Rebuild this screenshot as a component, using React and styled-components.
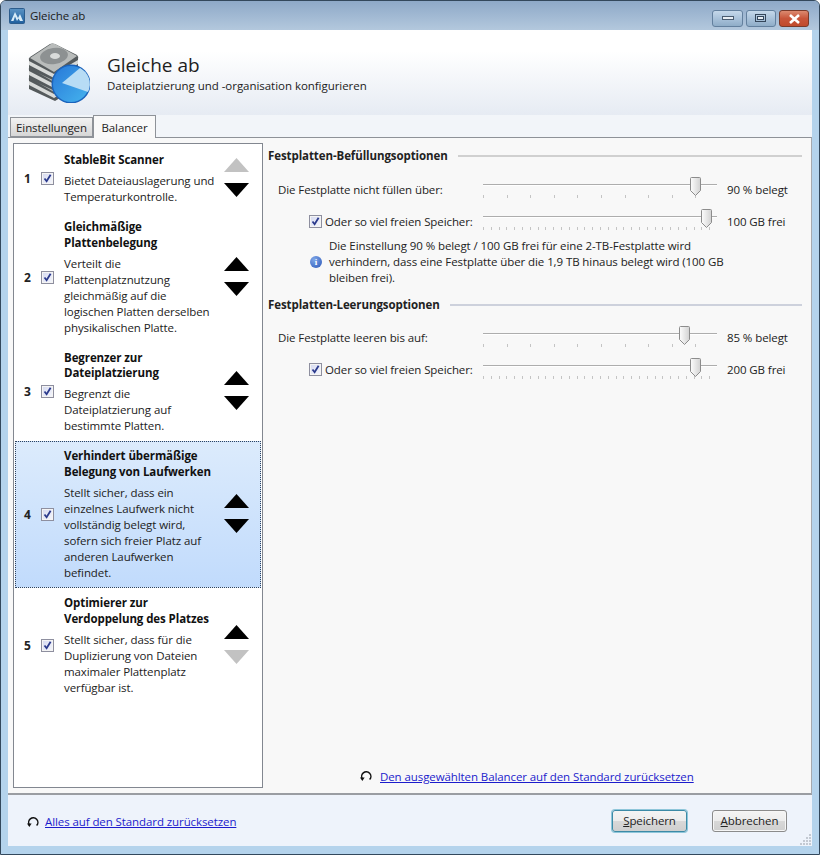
import React from 'react';
import styled, { createGlobalStyle } from 'styled-components';

const Global = createGlobalStyle`
  html, body { margin: 0; padding: 0; }
  body { font-family: "Open Sans", "Noto Sans", sans-serif; font-size: 11.5px; letter-spacing: -0.09px; color: #222; }
`;

const items = [
  { n: 1, title: ['StableBit Scanner'], desc: ['Bietet Dateiauslagerung und', 'Temperaturkontrolle.'], upOff: true },
  { n: 2, title: ['Gleichmäßige', 'Plattenbelegung'], desc: ['Verteilt die', 'Plattenplatznutzung', 'gleichmäßig auf die', 'logischen Platten derselben', 'physikalischen Platte.'] },
  { n: 3, title: ['Begrenzer zur', 'Dateiplatzierung'], desc: ['Begrenzt die', 'Dateiplatzierung auf', 'bestimmte Platten.'] },
  { n: 4, title: ['Verhindert übermäßige', 'Belegung von Laufwerken'], desc: ['Stellt sicher, dass ein', 'einzelnes Laufwerk nicht', 'vollständig belegt wird,', 'sofern sich freier Platz auf', 'anderen Laufwerken', 'befindet.'], selected: true },
  { n: 5, title: ['Optimierer zur', 'Verdoppelung des Platzes'], desc: ['Stellt sicher, dass für die', 'Duplizierung von Dateien', 'maximaler Plattenplatz', 'verfügbar ist.'], downOff: true },
];

function Lines({ text }) {
  return text.map((l) => <Line key={l}>{l}</Line>);
}

function Check() {
  return (
    <CheckBox>
      <svg width="9" height="9" viewBox="0 0 9 9">
        <path d="M1.5 4.5 L3.6 7.2 L7.6 0.8" fill="none" stroke="#2b3a8c" strokeWidth="1.8" />
      </svg>
    </CheckBox>
  );
}

function Arrow({ down, off }) {
  return (
    <svg width="25" height="14" viewBox="0 0 25 14">
      <path d={down ? 'M0 0 H25 L12.5 14 Z' : 'M12.5 0 L25 14 H0 Z'} fill={off ? '#c2c2c2' : '#000'} />
    </svg>
  );
}

function Reset() {
  return (
    <svg width="12" height="12" viewBox="0 0 12 12">
      <path d="M2.6 9.2 A4.6 4.6 0 1 1 9.6 9.6" fill="none" stroke="#111" strokeWidth="1.5" />
      <path d="M0 7.4 H4.6 L2.4 11 Z" fill="#111" />
    </svg>
  );
}

function Slider({ value, step }) {
  return (
    <SliderBox>
      <Track />
      <Ticks $step={step} />
      <Thumb style={{ left: `${value}px` }}>
        <svg width="11" height="19" viewBox="0 0 11 19">
          <defs>
            <linearGradient id="thumbFill" x1="0" y1="0" x2="1" y2="0">
              <stop offset="0" stopColor="#fdfdfd" />
              <stop offset="1" stopColor="#d2d2d2" />
            </linearGradient>
          </defs>
          <path d="M0.5 1.5 Q0.5 0.5 1.5 0.5 H9.5 Q10.5 0.5 10.5 1.5 V13.5 L5.5 18.5 L0.5 13.5 Z" fill="url(#thumbFill)" stroke="#8c8c8c" />
        </svg>
      </Thumb>
    </SliderBox>
  );
}

function DiskLogo() {
  const slab = (y) => (
    <g key={y}>
      <path d={`M1 ${y + 17} Q0 ${y + 16} 2 ${y + 14} L22 ${y + 1} Q24 ${y} 27 ${y + 1} L49 ${y + 12} Q51 ${y + 14} 50 ${y + 16} L50 ${y + 24} L27 ${y + 38} L1 ${y + 26} Z`} fill="#555a5c" />
      <path d={`M1 ${y + 18} L26 ${y + 31} L50 ${y + 17} L50 ${y + 21} L26 ${y + 35} L1 ${y + 22} Z`} fill="#d8dad8" />
      <path d={`M2 ${y + 15} L23 ${y + 1} Q25 ${y} 27 ${y + 1} L49 ${y + 13} L26 ${y + 29} Z`} fill="#b9bcbb" />
    </g>
  );
  return (
    <svg width="62" height="60" viewBox="0 0 62 60">
      <defs>
        <linearGradient id="pieFill" x1="0" y1="0" x2="1" y2="1">
          <stop offset="0" stopColor="#2878d8" />
          <stop offset="1" stopColor="#45b4ee" />
        </linearGradient>
      </defs>
      {[20, 10, 0].map(slab)}
      <ellipse cx="26" cy="13" rx="14" ry="8" fill="#8d9192" transform="rotate(-8 26 13)" />
      <ellipse cx="27" cy="13" rx="5" ry="3" fill="#d9dbda" />
      <circle cx="43" cy="41" r="19.5" fill="#1a63bc" />
      <circle cx="43" cy="41" r="18" fill="url(#pieFill)" />
      <path d="M34 40 L52 25 A18 18 0 0 1 60 49 Z" fill="#b7dcf5" />
    </svg>
  );
}

function AppIcon() {
  return (
    <svg width="16" height="16" viewBox="0 0 16 16">
      <defs>
        <linearGradient id="appFill" x1="0" y1="0" x2="0" y2="1">
          <stop offset="0" stopColor="#5a93c4" />
          <stop offset="1" stopColor="#1f5f9e" />
        </linearGradient>
      </defs>
      <rect x="0.5" y="0.5" width="15" height="15" rx="1" fill="url(#appFill)" stroke="#2c5c8c" />
      <path d="M2 13 L6 4 L9 10 L11 6 L14 13 H11 L9.5 10.5 L8 13 L6 8.5 L4.5 13 Z" fill="#d8ecf8" />
    </svg>
  );
}

export default function App() {
  return (
    <Window>
      <Global />
      <TitleBar>
        <AppIcon />
        <TitleText>Gleiche ab</TitleText>
        <WinButtons>
          <WinButton $wide>
            <svg width="12" height="5"><rect x="0.5" y="0.5" width="11" height="3" fill="#e8eef4" stroke="#4a5c70" /></svg>
          </WinButton>
          <WinButton>
            <svg width="12" height="9"><rect x="0.5" y="0.5" width="10" height="7" fill="none" stroke="#34465a" /><rect x="2.5" y="2.5" width="6" height="3" fill="#e8eef4" stroke="#34465a" /></svg>
          </WinButton>
          <WinButton $close>
            <svg width="13" height="10" viewBox="0 0 13 10"><path d="M2 1 L11 9 M11 1 L2 9" stroke="#fff" strokeWidth="2.6" /></svg>
          </WinButton>
        </WinButtons>
      </TitleBar>
      <Body>
        <Header>
          <LogoWrap><DiskLogo /></LogoWrap>
          <HeaderText>
            <HeaderTitle>Gleiche ab</HeaderTitle>
            <HeaderSub>Dateiplatzierung und -organisation konfigurieren</HeaderSub>
          </HeaderText>
        </Header>
        <TabRow>
          <Tab>Einstellungen</Tab>
          <Tab $active>Balancer</Tab>
        </TabRow>
        <Panel>
          <ListBox>
            {items.map((it) => (
              <Item key={it.n} $selected={it.selected}>
                <Num>{it.n}</Num>
                <Check />
                <ItemText>
                  <ItemTitle><Lines text={it.title} /></ItemTitle>
                  <div><Lines text={it.desc} /></div>
                </ItemText>
                <Arrows>
                  <Arrow off={it.upOff} />
                  <Arrow down off={it.downOff} />
                </Arrows>
              </Item>
            ))}
          </ListBox>
          <Options>
            <Heading>Festplatten-Befüllungsoptionen</Heading>
            <Rows>
              <Row>
                <RowLabel>Die Festplatte nicht füllen über:</RowLabel>
                <Slider value={207} step={23.6} />
                <RowValue>90 % belegt</RowValue>
              </Row>
              <Row>
                <RowLabel $indent><Check />Oder so viel freien Speicher:</RowLabel>
                <Slider value={218} step={7.8} />
                <RowValue>100 GB frei</RowValue>
              </Row>
            </Rows>
            <Note>
              <InfoIcon>i</InfoIcon>
              <NoteText>
                <Line>Die Einstellung 90 % belegt / 100 GB frei für eine 2-TB-Festplatte wird</Line>
                <Line>verhindern, dass eine Festplatte über die 1,9 TB hinaus belegt wird (100 GB</Line>
                <Line>bleiben frei).</Line>
              </NoteText>
            </Note>
            <Heading $second>Festplatten-Leerungsoptionen</Heading>
            <Rows>
              <Row>
                <RowLabel>Die Festplatte leeren bis auf:</RowLabel>
                <Slider value={196} step={23.6} />
                <RowValue>85 % belegt</RowValue>
              </Row>
              <Row>
                <RowLabel $indent><Check />Oder so viel freien Speicher:</RowLabel>
                <Slider value={207} step={7.8} />
                <RowValue>200 GB frei</RowValue>
              </Row>
            </Rows>
            <ResetRow>
              <Reset />
              <LinkText href="#">Den ausgewählten Balancer auf den Standard zurücksetzen</LinkText>
            </ResetRow>
          </Options>
        </Panel>
        <Footer>
          <FooterLink>
            <Reset />
            <LinkText href="#">Alles auf den Standard zurücksetzen</LinkText>
          </FooterLink>
          <FooterButtons>
            <Button $focused><u>S</u>peichern</Button>
            <Button><u>A</u>bbrechen</Button>
          </FooterButtons>
          <Grip>
            <svg width="12" height="12" viewBox="0 0 12 12" fill="#c3c9d2">
              <rect x="9" y="0" width="2" height="2" />
              <rect x="6" y="3" width="2" height="2" /><rect x="9" y="3" width="2" height="2" />
              <rect x="3" y="6" width="2" height="2" /><rect x="6" y="6" width="2" height="2" /><rect x="9" y="6" width="2" height="2" />
              <rect x="0" y="9" width="2" height="2" /><rect x="3" y="9" width="2" height="2" /><rect x="6" y="9" width="2" height="2" /><rect x="9" y="9" width="2" height="2" />
            </svg>
          </Grip>
        </Footer>
      </Body>
    </Window>
  );
}

const Window = styled.div`
  width: 820px;
  height: 855px;
  box-sizing: border-box;
  display: flex;
  flex-direction: column;
  border: 1px solid #33485c;
  border-radius: 6px 6px 0 0;
  background: #b4d3ec;
  overflow: hidden;
`;
const TitleBar = styled.div`
  height: 29px;
  flex: none;
  display: flex;
  align-items: center;
  padding: 0 10px 0 8px;
  background: linear-gradient(to bottom, #8ea9c8, #b3c8dd);
`;
const TitleText = styled.span`
  margin-left: 5px;
  color: #1a1a1a;
`;
const WinButtons = styled.div`
  margin-left: auto;
  display: flex;
  gap: 3px;
  align-self: flex-start;
  margin-top: 9px;
`;
const WinButton = styled.div`
  width: ${(p) => (p.$wide ? '31px' : '30px')};
  height: 17px;
  box-sizing: border-box;
  display: flex;
  align-items: center;
  justify-content: center;
  border: 1px solid ${(p) => (p.$close ? '#7a3a2a' : '#63809e')};
  border-radius: 3px;
  background: ${(p) =>
    p.$close
      ? 'linear-gradient(to bottom, #dc8a70 0, #c8553a 50%, #c04a2c 100%)'
      : 'linear-gradient(to bottom, #c5d8ea 0, #a9c2da 50%, #8fadc8 100%)'};
`;
const Body = styled.div`
  flex: 1;
  display: flex;
  flex-direction: column;
  margin: 0 7px 8px;
  min-height: 0;
`;
const Header = styled.div`
  height: 85px;
  flex: none;
  display: flex;
  background: linear-gradient(to bottom, #fff 0, #fff 25%, #e6ebf3 100%);
`;
const LogoWrap = styled.div`
  padding: 13px 0 0 20px;
  width: 79px;
`;
const HeaderText = styled.div`
  padding-top: 22px;
`;
const HeaderTitle = styled.div`
  font-size: 19px;
  line-height: 26px;
  letter-spacing: 0;
  color: #1e1e1e;
`;
const HeaderSub = styled.div`
  line-height: 16px;
  letter-spacing: -0.04px;
`;
const TabRow = styled.div`
  height: 22px;
  flex: none;
  display: flex;
  align-items: flex-end;
  padding-left: 2px;
  background: #f2f5f9;
`;
const Tab = styled.div`
  box-sizing: border-box;
  height: ${(p) => (p.$active ? '23px' : '20px')};
  margin-bottom: ${(p) => (p.$active ? '-1px' : '0')};
  width: ${(p) => (p.$active ? '63px' : '83px')};
  display: flex;
  align-items: center;
  justify-content: center;
  position: relative;
  z-index: ${(p) => (p.$active ? 2 : 1)};
  border: 1px solid #8e9298;
  border-bottom: ${(p) => (p.$active ? 'none' : '1px solid #8e9298')};
  background: ${(p) => (p.$active ? '#f9f9f9' : 'linear-gradient(to bottom, #f2f2f2, #d6d6d6)')};
`;
const Panel = styled.div`
  flex: 1;
  min-height: 0;
  box-sizing: border-box;
  display: flex;
  padding: 5px 0 5px 5px;
  background: #f8f8f8;
  border-top: 1px solid #8e9298;
  border-bottom: 2px solid #9a9da2;
  border-right: 1px solid #a6a9ae;
`;
const ListBox = styled.div`
  width: 250px;
  flex: none;
  box-sizing: border-box;
  padding: 1px;
  background: #fff;
  border: 1px solid #828790;
`;
const Item = styled.div`
  box-sizing: border-box;
  display: flex;
  align-items: center;
  padding: 6px 0 6px 8px;
  border: 1px ${(p) => (p.$selected ? 'dotted #30435c' : 'solid transparent')};
  background: ${(p) => (p.$selected ? 'linear-gradient(to bottom, #dcebfc, #c1dbfc)' : 'transparent')};
`;
const Num = styled.span`
  width: 17px;
  flex: none;
  font-weight: 700;
  font-size: 12px;
`;
const CheckBox = styled.span`
  width: 13px;
  height: 13px;
  flex: none;
  box-sizing: border-box;
  display: inline-flex;
  align-items: center;
  justify-content: center;
  border: 1px solid #8e8f9f;
  background: linear-gradient(135deg, #d5d9f0, #f6f7fc);
  box-shadow: inset 0 0 0 1px #f4f4f4;
`;
const ItemText = styled.div`
  width: 160px;
  flex: none;
  margin-left: 10px;
`;
const Line = styled.div`
  line-height: 15.95px;
  white-space: nowrap;
`;
const ItemTitle = styled.div`
  font-weight: 700;
  margin-bottom: 5px;
  color: #111;
`;
const Arrows = styled.div`
  display: flex;
  flex-direction: column;
  gap: 11px;
  margin-top: -2px;
  svg { display: block; }
`;
const Options = styled.div`
  flex: 1;
  min-width: 0;
  display: flex;
  flex-direction: column;
  padding: 5px 9px 4px 5px;
`;
const Heading = styled.div`
  display: flex;
  align-items: center;
  gap: 10px;
  font-weight: 700;
  line-height: 16px;
  margin-top: ${(p) => (p.$second ? '11px' : '0')};
  &::after {
    content: '';
    flex: 1;
    height: 2px;
    background: ${(p) => (p.$second ? '#cdd1dc' : '#d0d0d0')};
  }
`;
const Rows = styled.div`
  margin: 10px 0 0 10px;
`;
const Row = styled.div`
  height: 32px;
  display: flex;
  align-items: center;
`;
const RowLabel = styled.div`
  width: 205px;
  flex: none;
  box-sizing: border-box;
  display: flex;
  align-items: center;
  gap: 3px;
  padding-left: ${(p) => (p.$indent ? '31px' : '0')};
  padding-bottom: 2px;
  white-space: nowrap;
`;
const SliderBox = styled.div`
  width: 234px;
  height: 32px;
  flex: none;
  position: relative;
`;
const Track = styled.div`
  position: absolute;
  left: 0;
  right: 0;
  top: 10px;
  height: 2px;
  background: linear-gradient(to bottom, #adadad 50%, #fff 50%);
`;
const Ticks = styled.div`
  position: absolute;
  left: 0;
  right: 0;
  top: 21px;
  height: 3px;
  background: repeating-linear-gradient(to right, #c4c4c4 0, #c4c4c4 1px, transparent 1px, transparent ${(p) => p.$step}px);
`;
const Thumb = styled.div`
  position: absolute;
  top: 3px;
  line-height: 0;
`;
const RowValue = styled.div`
  margin-left: 10px;
  padding-bottom: 2px;
  white-space: nowrap;
`;
const Note = styled.div`
  display: flex;
  align-items: center;
  padding-left: 42px;
`;
const InfoIcon = styled.span`
  width: 12px;
  height: 12px;
  flex: none;
  display: inline-flex;
  align-items: center;
  justify-content: center;
  border-radius: 50%;
  margin-right: 7px;
  font: 700 9px "Liberation Serif", serif;
  color: #fff;
  background: radial-gradient(circle at 35% 30%, #7ea6e8, #2b57b8);
`;
const NoteText = styled.div``;
const ResetRow = styled.div`
  margin-top: auto;
  display: flex;
  align-items: center;
  gap: 8px;
  padding-left: 92px;
  height: 16px;
`;
const LinkText = styled.a`
  color: #1c1ccc;
  text-decoration: underline;
  white-space: nowrap;
`;
const Footer = styled.div`
  height: 51px;
  flex: none;
  display: flex;
  align-items: center;
  position: relative;
  padding: 0 25px 0 19px;
  background: #eef3fb;
`;
const FooterLink = styled.div`
  display: flex;
  align-items: center;
  gap: 6px;
  padding-top: 2px;
`;
const FooterButtons = styled.div`
  margin-left: auto;
  display: flex;
  gap: 25px;
`;
const Button = styled.div`
  width: 75px;
  height: 22px;
  box-sizing: border-box;
  display: flex;
  align-items: center;
  justify-content: center;
  border-radius: 3px;
  border: 1px solid ${(p) => (p.$focused ? '#3c8aa6' : '#8b8b8b')};
  box-shadow: ${(p) => (p.$focused ? '0 0 0 1px #8fc6da' : 'inset 0 0 0 1px #f6f6f6')};
  background: linear-gradient(to bottom, #f4f4f4 0, #ececec 50%, #d8d8d8 51%, #cfcfcf 100%);
`;
const Grip = styled.div`
  position: absolute;
  right: 0;
  bottom: 0;
  line-height: 0;
`;
